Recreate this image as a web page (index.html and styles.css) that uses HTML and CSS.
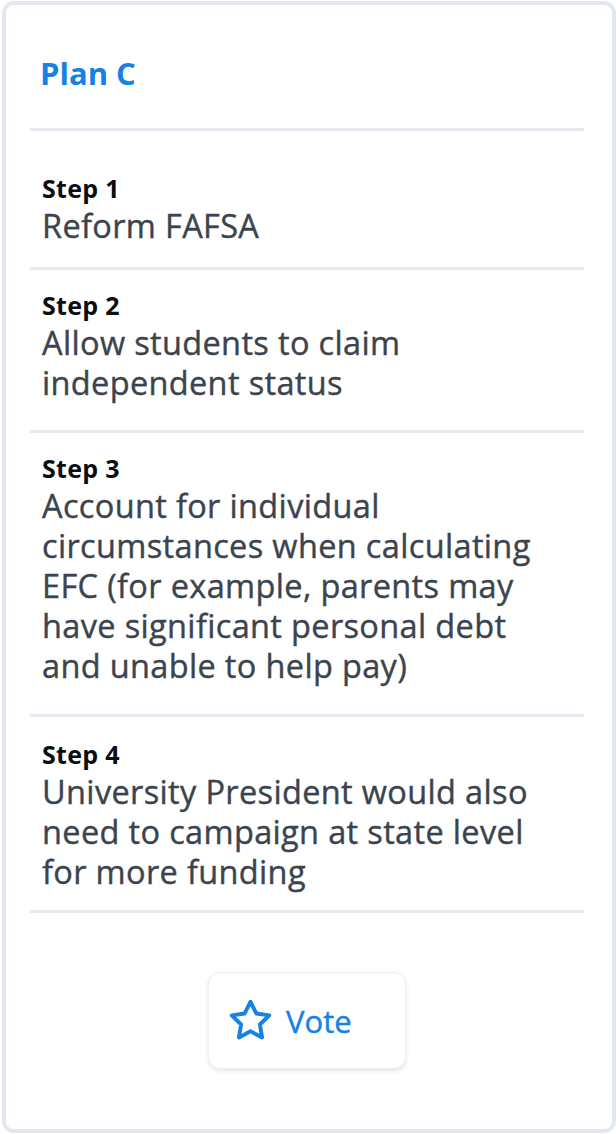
FILE: index.html
```html
<!DOCTYPE html>
<html lang="en">
<head>
<meta charset="utf-8">
<title>Plan C</title>
<link rel="stylesheet" href="styles.css">
</head>
<body>
<div class="card">
  <h2 class="title">Plan C</h2>
  <div class="steps">
    <div class="step step-1">
      <div class="step-label">Step 1</div>
      <div class="step-text">Reform FAFSA</div>
    </div>
    <div class="step step-2">
      <div class="step-label">Step 2</div>
      <div class="step-text">Allow students to claim independent status</div>
    </div>
    <div class="step step-3">
      <div class="step-label">Step 3</div>
      <div class="step-text">Account for individual circumstances when calculating EFC (for example, parents may have significant personal debt and unable to help pay)</div>
    </div>
    <div class="step step-4">
      <div class="step-label">Step 4</div>
      <div class="step-text">University President would also need to campaign at state level for more funding</div>
    </div>
  </div>
  <div class="actions">
    <button class="vote-btn" type="button">
      <svg class="star" viewBox="0 0 24 24" width="45" height="45" fill="none" stroke="currentColor" stroke-width="2.1" stroke-linejoin="round" stroke-linecap="round"><polygon points="12 2 15.09 8.26 22 9.27 17 14.14 18.18 21.02 12 17.77 5.82 21.02 7 14.14 2 9.27 8.91 8.26 12 2"/></svg>
      <span class="vote-label">Vote</span>
    </button>
  </div>
</div>
</body>
</html>
```

FILE: styles.css
```css
html, body {
  margin: 0;
  padding: 0;
  background: #ffffff;
}

body {
  font-family: "Open Sans", "Noto Sans", sans-serif;
}

.card {
  box-sizing: border-box;
  width: 614px;
  margin: 1px 0 0 2px;
  border: 4px solid #e3e8ee;
  border-radius: 12px;
  padding: 48px 28px 60px 24px;
  background: #ffffff;
}

.title {
  margin: 0 0 35px;
  padding: 0 10px;
  font-size: 31px;
  line-height: 40px;
  font-weight: 700;
  color: #1682e3;
}

.steps {
  border-bottom: 3px solid #e5eaf0;
}

.step {
  border-top: 3px solid #e5eaf0;
  padding: 20px 20px 20px 12px;
}

.step-1 { padding-top: 42px; padding-bottom: 21px; }
.step-2 { padding-bottom: 27px; }
.step-3 { padding-top: 20px; padding-bottom: 28px; }
.step-4 { padding-top: 22px; padding-bottom: 18px; }

.step-label {
  font-size: 25px;
  line-height: 30px;
  font-weight: 700;
  letter-spacing: 0.3px;
  color: #0b0d10;
  margin-bottom: 3px;
}

.step-text {
  font-size: 32.5px;
  line-height: 40px;
  font-weight: 400;
  letter-spacing: 0.35px;
  color: #3b444e;
  -webkit-text-stroke: 0.4px #3b444e;
}

.actions {
  display: flex;
  justify-content: center;
  padding-top: 59px;
}

.vote-btn {
  box-sizing: border-box;
  width: 198px;
  height: 97px;
  display: flex;
  align-items: center;
  gap: 13px;
  padding: 0 0 0 19px;
  margin: 0;
  background: #ffffff;
  border: 1px solid #eceff3;
  border-radius: 12px;
  box-shadow: 0 2px 4px rgba(30, 45, 70, 0.12);
  color: #1682e3;
  font-family: "Open Sans", "Noto Sans", sans-serif;
  cursor: pointer;
}

.star {
  display: block;
  flex: none;
}

.vote-label {
  font-size: 31px;
  line-height: 40px;
  font-weight: 400;
  -webkit-text-stroke: 0.4px #1682e3;
}
```
